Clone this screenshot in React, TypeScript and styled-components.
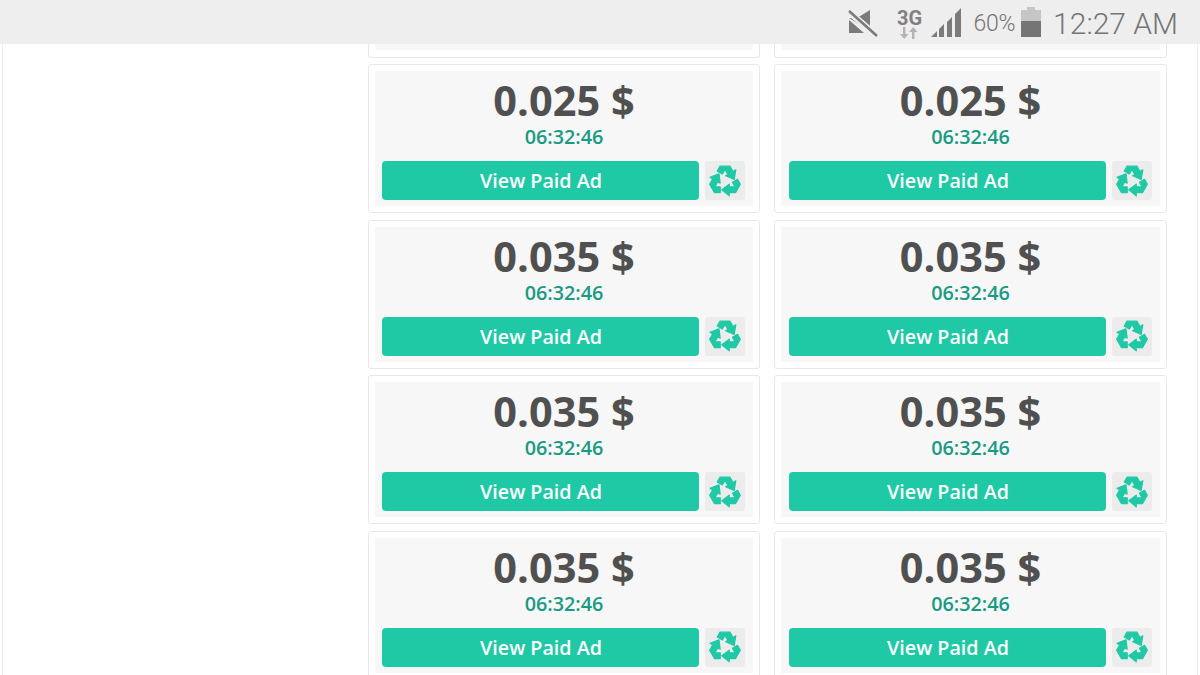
import React from 'react';
import styled, { createGlobalStyle } from 'styled-components';

const GlobalStyle = createGlobalStyle`
  html, body {
    margin: 0;
    padding: 0;
    height: 100%;
    overflow: hidden;
    background: #fff;
    font-family: "Open Sans", "Liberation Sans", sans-serif;
  }
  * { box-sizing: border-box; }
`;

const Screen = styled.div`
  width: 1200px;
  height: 675px;
  display: flex;
  flex-direction: column;
  overflow: hidden;
`;

const StatusBar = styled.div`
  height: 44px;
  flex: none;
  display: flex;
  align-items: center;
  justify-content: flex-end;
  padding-right: 22px;
  background: #eeeeee;
  color: #757575;
`;

const StatusIcon = styled.svg<{ $gap?: number }>`
  display: block;
  flex: none;
  margin-right: ${(p) => p.$gap ?? 0}px;
`;

const NetworkBox = styled.div`
  width: 28px;
  margin-right: 8px;
  padding-top: 3px;
  display: flex;
  flex-direction: column;
  align-items: center;
`;

const NetworkLabel = styled.span`
  font-size: 20px;
  line-height: 18px;
  font-weight: 700;
  color: #808080;
  font-family: "Roboto", sans-serif;
`;

const Percent = styled.span`
  font-family: "Roboto", sans-serif;
  font-weight: 300;
  font-size: 23px;
  letter-spacing: -0.3px;
  margin-right: 6px;
  padding-top: 3px;
`;

const Clock = styled.span`
  font-family: "Roboto", sans-serif;
  font-weight: 300;
  font-size: 30px;
  padding-top: 2px;
`;

const Page = styled.div`
  flex: 1;
  min-height: 0;
  margin: 0 2px;
  border-left: 1px solid #ececec;
  border-right: 1px solid #ececec;
  padding-left: 365px;
  background: #fff;
`;

const Grid = styled.div`
  width: 799px;
  display: grid;
  grid-template-columns: 392px 393px;
  column-gap: 14px;
  row-gap: 6.5px;
`;

const Stub = styled.div`
  height: 13.5px;
  padding: 0 6px 7px;
  background: #fff;
  border: 1px solid #e9e9e9;
  border-top: none;
  border-radius: 0 0 3px 3px;
`;

const StubFill = styled.div`
  height: 100%;
  background: #f8f8f8;
`;

const Card = styled.div`
  height: 149px;
  padding: 6px;
  background: #fff;
  border: 1px solid #e9e9e9;
  border-radius: 3px;
`;

const CardInner = styled.div`
  height: 100%;
  padding: 7px 7px 0;
  background: #f7f7f7;
  display: flex;
  flex-direction: column;
  align-items: center;
`;

const Price = styled.div`
  font-size: 41.5px;
  line-height: 44px;
  font-weight: 700;
  color: #505050;
`;

const Timer = styled.div`
  margin-top: 3px;
  font-size: 19.8px;
  line-height: 24px;
  font-weight: 550;
  color: #1a9a85;
`;

const Actions = styled.div<{ $inset?: number }>`
  width: 100%;
  margin-top: 12px;
  padding-left: ${(p) => p.$inset ?? 0}px;
  display: flex;
  gap: 6px;
`;

const ViewButton = styled.button`
  width: 317px;
  height: 39px;
  border: none;
  border-radius: 4px;
  padding: 0 0 0 1px;
  background: #20c9a5;
  color: #fff;
  font-family: inherit;
  font-size: 19.7px;
  font-weight: 550;
`;

const RecycleButton = styled.div`
  width: 40px;
  height: 39px;
  border-radius: 3px;
  background: #ececec;
  display: flex;
  align-items: center;
  justify-content: center;
`;

const arrow =
  'M7.72 5.6L10.4 1H19.6L22.53 6.04 25.12 4.54 23.64 13.47 15.6 10.04 17.76 8.79 15 4 12.49 8.35Z';

const RecycleIcon = () => (
  <svg width="34" height="34" viewBox="-1 -1 32 32" fill="#20c9a5" stroke="#20c9a5" strokeWidth="1.2" strokeLinejoin="round">
    <path d={arrow} />
    <path d={arrow} transform="rotate(120 15 15)" />
    <path d={arrow} transform="rotate(240 15 15)" />
  </svg>
);

const prices = ['0.025', '0.035', '0.035', '0.035'];

const AdCard = ({ price, inset }: { price: string; inset?: number }) => (
  <Card>
    <CardInner>
      <Price>{price} $</Price>
      <Timer>06:32:46</Timer>
      <Actions $inset={inset}>
        <ViewButton>View Paid Ad</ViewButton>
        <RecycleButton>
          <RecycleIcon />
        </RecycleButton>
      </Actions>
    </CardInner>
  </Card>
);

const App = () => (
  <Screen>
    <GlobalStyle />
    <StatusBar>
      <StatusIcon $gap={17} width="30" height="30" viewBox="0 0 30 30">
        <path d="M1 11h8l13-8v21zM1 13l15 13H1z" fill="#7b7b7b" />
        <path d="M0 4l30 26" stroke="#eeeeee" strokeWidth="6.5" />
        <path d="M1 4l28 25" stroke="#7b7b7b" strokeWidth="2.6" />
      </StatusIcon>
      <NetworkBox>
        <NetworkLabel>3G</NetworkLabel>
        <StatusIcon width="18" height="12" viewBox="0 0 18 12">
          <path d="M5.5 0v7h3l-4.2 5L0 7h3V0zM14.5 12V5h3L13.3 0 9 5h3v7z" fill="#b4b4b4" />
        </StatusIcon>
      </NetworkBox>
      <StatusIcon $gap={11} width="31" height="30" viewBox="0 0 31 30">
        <path d="M0 30l6-6v6zM8 30v-8l5-5v13zM16 30V15l5-5v20zM24 30V7l6-6v29z" fill="#7b7b7b" />
      </StatusIcon>
      <Percent>60%</Percent>
      <StatusIcon $gap={12} width="20" height="30" viewBox="0 0 20 30">
        <path d="M6 0h8v3h6v13H0V3h6z" fill="#c6c6c6" />
        <path d="M0 14h20v16H0z" fill="#757575" />
      </StatusIcon>
      <Clock>12:27 AM</Clock>
    </StatusBar>
    <Page>
      <Grid>
        <Stub><StubFill /></Stub>
        <Stub><StubFill /></Stub>
        {prices.map((price, i) => (
          <React.Fragment key={i}>
            <AdCard price={price} />
            <AdCard price={price} inset={1} />
          </React.Fragment>
        ))}
      </Grid>
    </Page>
  </Screen>
);

export default App;
